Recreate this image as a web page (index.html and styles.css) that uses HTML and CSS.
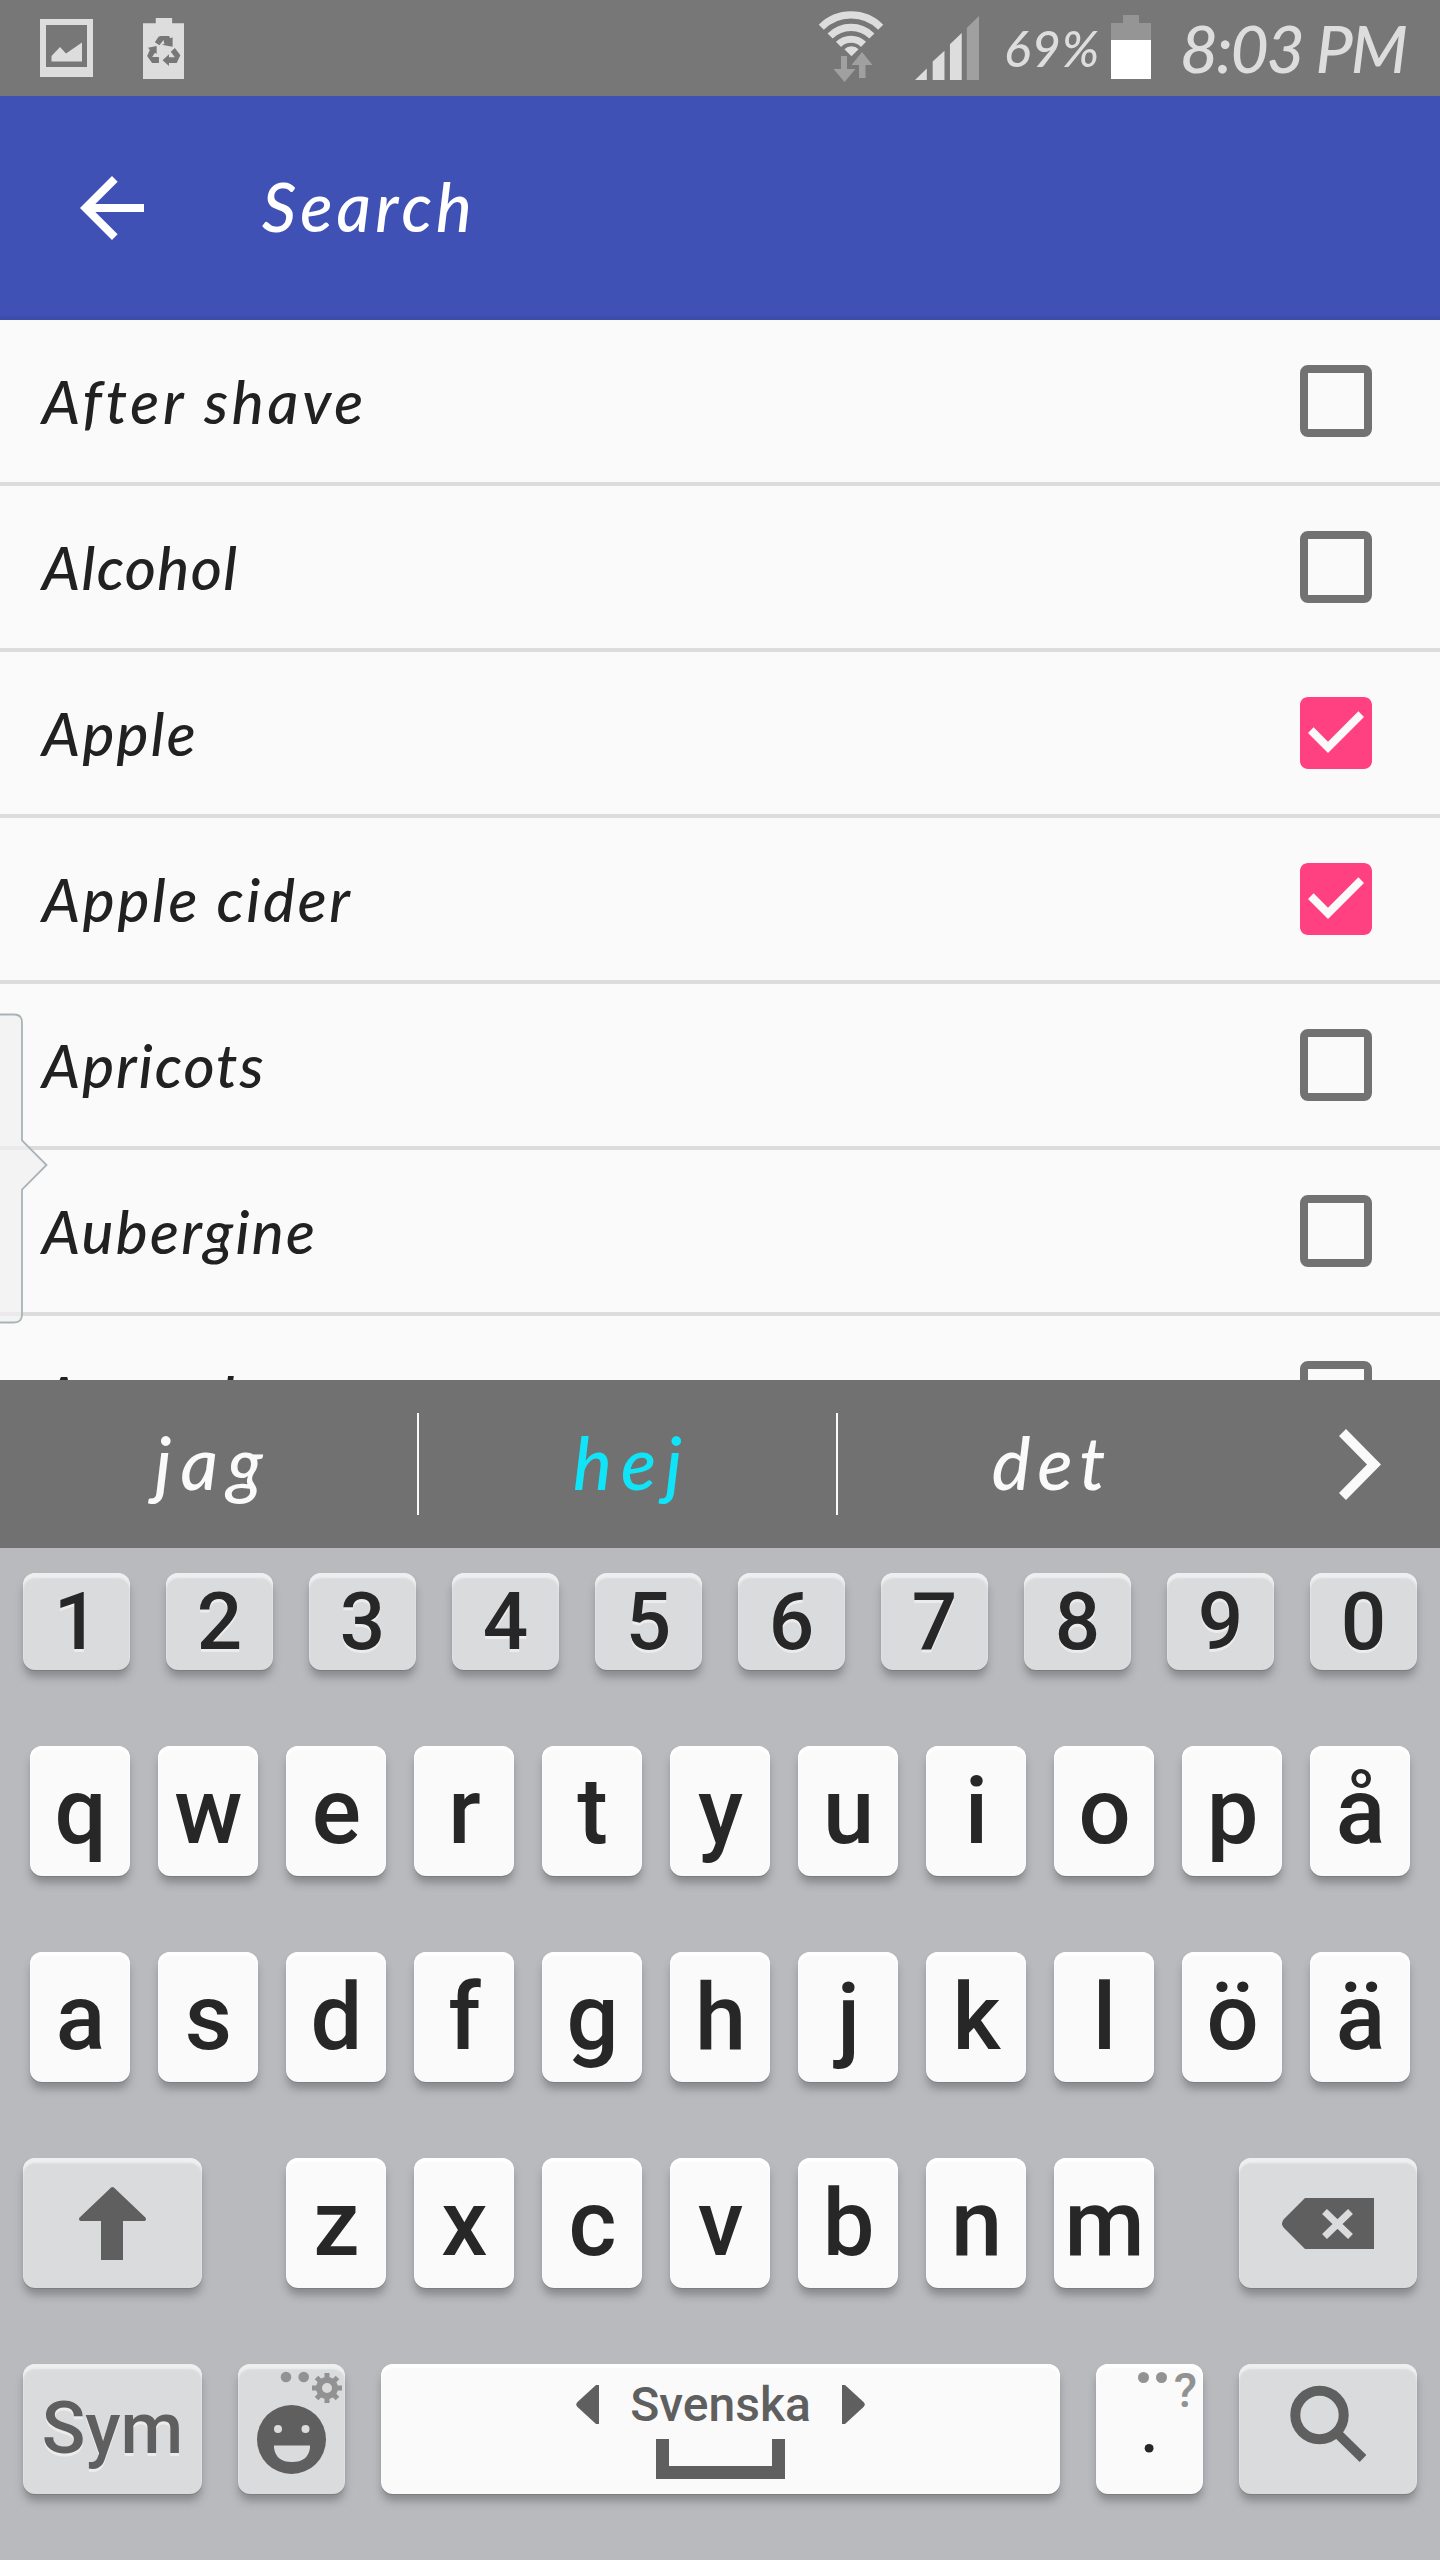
FILE: index.html
```html
<!DOCTYPE html>
<html lang="sv">
<head>
<meta charset="utf-8">
<title>Search</title>
<link rel="stylesheet" href="styles.css">
</head>
<body>
<div class="screen">
  <header class="status">
    <svg class="st-image" viewBox="0 0 53 58"><path fill="#ddd" fill-rule="evenodd" d="M0 0H53V58H0ZM6 6V48H47V6Z"/><path fill="#ddd" d="M11.500 42.500V37L20 28L26 34.500L42 23.500V42.500Z"/></svg>
    <svg class="st-recycle" viewBox="311 51 90 183" preserveAspectRatio="none"><path fill="#ddd" d="M339 51H375V67H401V234H311V67H339Z"/><path fill="#777" d="M337 124L345 107L350 105H368L371 112L376 109V137L352 131L358 129L356 117L347 133ZM322 140L341 135V158L337 156L331 168H346V186H331L320 165L326 147ZM372 152L381 141L393 163L385 186H368V195L354 178L368 160V169H381Z"/></svg>
    <div class="st-right">
      <svg class="st-wifi" viewBox="0 0 66 71"><g fill="none" stroke="#ddd" stroke-width="7.200"><path d="M3.300 16.200A42 42 0 0 1 62.700 16.200"/><path d="M12.100 25A29.600 29.600 0 0 1 53.900 25"/><path d="M20.500 33.400A17.700 17.700 0 0 1 45.500 33.400"/></g><path fill="#ddd" d="M33.500 45.300L26.400 38.200A10 10 0 0 1 40.600 38.200Z"/><path fill="#a0a0a0" d="M23 45H29V58H37.500L26.500 71L15.500 58H23ZM41 67V54H33.500L44 41L54.500 54H47.500V67Z"/></svg>
      <svg class="st-signal" viewBox="321 47 152 193" preserveAspectRatio="none"><path fill="#ddd" d="M321 240L349 205V240ZM363 240V184L391 152V240ZM404 240V132L432 98V240Z"/><path fill="#a0a0a0" d="M444 240V83L473 47V240Z"/></svg>
      <span class="st-percent">69%</span>
      <svg class="st-battery" viewBox="0 0 40 64"><path fill="#959595" d="M12 0H28V8H40V25H0V8H12Z"/><path fill="#fff" d="M0 25H40V64H0Z"/></svg>
      <span class="st-time">8:03 PM</span>
    </div>
  </header>

  <div class="toolbar">
    <svg class="back" viewBox="4 4 16 16"><path fill="#fff" d="M20 11H7.830l5.590-5.590L12 4l-8 8 8 8 1.410-1.410L7.830 13H20v-2z"/></svg>
    <h1 class="title">Search</h1>
  </div>

  <main class="list">
    <div class="row"><span class="label l-shave">After shave</span><span class="box"></span></div>
    <div class="row"><span class="label l-alcohol">Alcohol</span><span class="box"></span></div>
    <div class="row"><span class="label l-apple">Apple</span><svg class="check" viewBox="3 3 18 18"><path fill="#ff4081" d="M19 3H5c-1.110 0-2 .9-2 2v14c0 1.100.890 2 2 2h14c1.110 0 2-.9 2-2V5c0-1.100-.890-2-2-2zm-9 14l-5-5 1.410-1.410L10 14.170l7.590-7.590L19 8l-9 9z"/></svg></div>
    <div class="row"><span class="label l-cider">Apple cider</span><svg class="check" viewBox="3 3 18 18"><path fill="#ff4081" d="M19 3H5c-1.110 0-2 .9-2 2v14c0 1.100.890 2 2 2h14c1.110 0 2-.9 2-2V5c0-1.100-.890-2-2-2zm-9 14l-5-5 1.410-1.410L10 14.170l7.590-7.590L19 8l-9 9z"/></svg></div>
    <div class="row"><span class="label l-apricots">Apricots</span><span class="box"></span></div>
    <div class="row"><span class="label l-aubergine">Aubergine</span><span class="box"></span></div>
    <div class="row"><span class="label l-avocado">Avocado</span><span class="box"></span></div>
    <svg class="edge-handle" viewBox="0 0 50 312"><path d="M-2 1.500H14Q22 1.500 22 9.500V127.500L46.500 152L22 176.500V301.500Q22 309.500 14 309.500H-2Z" fill="#f0f0f0" fill-opacity=".7" stroke="#a9b3b7" stroke-width="1.800"/></svg>
  </main>

  <div class="suggest">
    <span class="word w-jag">jag</span>
    <span class="word w-hej">hej</span>
    <span class="word w-det">det</span>
    <span class="more"><svg viewBox="0 0 42 71"><path fill="#fafafa" d="M7 0L42 35.500L7 71L0 64L28 35.500L0 7Z"/></svg></span>
  </div>

  <div class="keyboard">
    <div class="keys digits">
      <span class="key gray">1</span><span class="key gray">2</span><span class="key gray">3</span><span class="key gray">4</span><span class="key gray">5</span><span class="key gray">6</span><span class="key gray">7</span><span class="key gray">8</span><span class="key gray">9</span><span class="key gray">0</span>
    </div>
    <div class="keys letters">
      <span class="key">q</span><span class="key">w</span><span class="key">e</span><span class="key">r</span><span class="key">t</span><span class="key">y</span><span class="key">u</span><span class="key">i</span><span class="key">o</span><span class="key">p</span><span class="key">å</span>
    </div>
    <div class="keys letters">
      <span class="key">a</span><span class="key">s</span><span class="key">d</span><span class="key">f</span><span class="key">g</span><span class="key">h</span><span class="key">j</span><span class="key">k</span><span class="key">l</span><span class="key">ö</span><span class="key">ä</span>
    </div>
    <div class="keys bottom-letters">
      <span class="key gray wide"><svg class="full" viewBox="0 0 179 130"><path fill="#5f5f5f" stroke="#5f5f5f" stroke-width="4" stroke-linejoin="round" d="M89.500 31L121 61H58Z"/><path fill="#5f5f5f" d="M78 60H100V102H78Z"/></svg></span>
      <div class="mid"><span class="key">z</span><span class="key">x</span><span class="key">c</span><span class="key">v</span><span class="key">b</span><span class="key">n</span><span class="key">m</span></div>
      <span class="key gray wide action"><svg class="full" viewBox="0 0 178 130"><path fill="#5f5f5f" d="M66 40H135V91H66L45 70Q41 65.500 45 61Z"/><path fill="none" stroke="#dadbdd" stroke-width="7" d="M85.500 53.500L111.500 78.500M111.500 53.500L85.500 78.500"/></svg></span>
    </div>
    <div class="keys functions">
      <span class="key gray wide sym">Sym</span>
      <span class="key gray small"><svg class="full" viewBox="0 0 107 130"><g fill="#929292"><circle cx="48" cy="13" r="5.300"/><circle cx="65.700" cy="13" r="5.300"/></g><g stroke="#929292" stroke-width="5"><path d="M89 9V14M89 34V39M74 24H79M99 24H104M78.500 13.500L82 17M96 31L99.500 34.500M99.500 13.500L96 17M82 31L78.500 34.500"/><circle cx="89" cy="24" r="8" fill="none" stroke-width="6"/></g><circle cx="53.500" cy="75.500" r="34.500" fill="#5f5f5f"/><path fill="#dadbdd" d="M36 81.500H72V84Q70 98 54 98Q38 98 36 84Z"/><g fill="#dadbdd"><circle cx="40" cy="65" r="4"/><circle cx="67.500" cy="65" r="4"/></g></svg></span>
      <span class="key space">
        <span class="lang"><svg viewBox="0 0 23 39"><path fill="#5f5f5f" d="M23 0V39H20L1.500 22Q-1 19.500 1.500 17L20 0Z"/></svg><span class="lang-name">Svenska</span><svg viewBox="0 0 23 39"><path fill="#5f5f5f" d="M0 0V39H3L21.500 22Q24 19.500 21.500 17L3 0Z"/></svg></span>
        <span class="bracket"></span>
      </span>
      <span class="key small dot"><span class="hint"><i></i><i></i><b>?</b></span><span class="period">.</span></span>
      <span class="key gray wide action"><svg class="full" viewBox="0 0 178 130"><circle cx="80.500" cy="51" r="24.200" fill="none" stroke="#5f5f5f" stroke-width="10"/><path d="M98 69L124 94.500" stroke="#5f5f5f" stroke-width="9.500"/></svg></span>
    </div>
  </div>
</div>
</body>
</html>
```
FILE: styles.css
```css
* { box-sizing: border-box; }
body { margin: 0; }
svg { display: block; flex: none; }

.screen {
  width: 1440px;
  height: 2560px;
  display: flex;
  flex-direction: column;
  overflow: hidden;
  background: #fafafa;
  font-family: Lato, "Open Sans", sans-serif;
  font-style: italic;
  font-weight: 500;
  white-space: nowrap;
}

/* status bar */
.status {
  flex: none;
  height: 96px;
  padding: 0 36px 0 40px;
  display: flex;
  align-items: center;
  background: #777;
  color: #ddd;
}
.st-image { width: 53px; height: 58px; margin-right: 50px; }
.st-recycle { width: 41px; height: 61px; }
.st-right { margin-left: auto; display: flex; align-items: center; }
.st-wifi { width: 66px; height: 71px; margin: -4px 31px 0 0; }
.st-signal { width: 64px; height: 64px; margin-right: 25px; }
.st-percent { width: 96px; margin-right: 11px; font-size: 50px; letter-spacing: 1px; line-height: 92px; }
.st-battery { width: 40px; height: 64px; margin: -2px 29px 0 0; }
.st-time { width: 224px; font-size: 66px; letter-spacing: -2.2px; line-height: 96px; }

/* toolbar */
.toolbar {
  flex: none;
  height: 224px;
  padding-left: 80px;
  display: flex;
  align-items: center;
  background: #3f51b5;
  border-bottom: 4px solid #3c4dac;
  color: #fff;
}
.back { width: 64px; height: 64px; margin: 4px 118px 0 0; }
.title { margin: 0; font-size: 67px; font-weight: 500; letter-spacing: 4.2px; }

/* list */
.list { position: relative; height: 1060px; flex: none; overflow: hidden; color: #212121; }
.row {
  height: 166px;
  padding: 0 68px 0 42px;
  display: flex;
  align-items: center;
  justify-content: space-between;
  border-bottom: 4px solid #dcdcdc;
}
.label { font-size: 60px; line-height: 72px; padding-bottom: 1px; }
.l-shave { letter-spacing: 3.8px; }
.l-alcohol { letter-spacing: 1.4px; }
.l-apple { letter-spacing: 2.3px; }
.l-cider { letter-spacing: 2.7px; }
.l-apricots { letter-spacing: 2px; }
.l-aubergine { letter-spacing: 2.3px; }
.l-avocado { letter-spacing: 1.5px; }
.box { width: 72px; height: 72px; border: 8px solid #727272; border-radius: 8px; }
.check { width: 72px; height: 72px; }
.edge-handle { position: absolute; left: 0; top: 693px; width: 50px; height: 312px; }

/* suggestions */
.suggest { flex: none; height: 168px; display: flex; align-items: center; background: #717171; color: #fafafa; font-size: 73px; letter-spacing: 9px; }
.word { width: 419px; height: 102px; padding-left: 9px; line-height: 98px; text-align: center; border-right: 2px solid #fafafa; }
.w-hej { color: #0fe4f8; }
.w-det { border-right: 0; letter-spacing: 7px; }
.more { flex: 1; padding-left: 82px; }
.more svg { width: 42px; height: 71px; }

/* keyboard */
.keyboard {
  flex: none;
  height: 1012px;
  padding: 25px 23px 0;
  background: #b9babe;
  color: #272727;
  font-family: Roboto, sans-serif;
  font-style: normal;
  font-weight: 500;
  letter-spacing: 0;
}
.keys { display: flex; justify-content: space-between; height: 130px; margin-bottom: 76px; }
.key {
  display: flex;
  align-items: center;
  justify-content: center;
  width: 100px;
  height: 130px;
  border-radius: 12px;
  background: #fafafa;
  font-size: 92px;
  line-height: 130px;
  box-shadow: inset 0 4px 2px #fff, 0 1px 0 #7d7e80, 0 8px 8px -1px rgba(70, 70, 75, .42);
}
.gray {
  background: #dadbdd;
  text-shadow: 0 3px 0 #ececed;
  box-shadow: inset 0 5px 2px #efeff0, 0 1px 0 #7d7e80, 0 8px 8px -1px rgba(70, 70, 75, .42);
}
.digits { height: 97px; }
.digits .key { width: 107px; height: 97px; font-size: 80px; line-height: 97px; padding-top: 1px; }
.letters { padding: 0 7px; }
.letters .key, .mid .key { padding: 1px 0 0 1px; }
.mid { display: flex; gap: 28px; }
.key.wide { width: 179px; }
.key.action { width: 178px; }
.bottom-letters { justify-content: flex-start; }
.bottom-letters .mid { margin: 0 85px 0 84px; }
.key.small { width: 107px; }
.key.sym { font-size: 72px; color: #5f5f5f; }
.full { width: 100%; height: 100%; }
.key.space { width: 679px; flex-direction: column; justify-content: flex-start; padding: 11px 0 0; }
.lang { display: flex; align-items: center; gap: 31px; height: 60px; padding-bottom: 1px; }
.lang svg { width: 23px; height: 39px; }
.lang-name { font-size: 48px; line-height: 54px; color: #5f5f5f; }
.bracket { width: 129px; height: 40px; margin-top: 4px; border: 13px solid #5f5f5f; border-top: 0; }
.key.dot { flex-direction: column; justify-content: flex-start; }
.hint { align-self: flex-end; display: flex; gap: 7px; height: 52px; padding: 8px 6px 0 0; color: #929292; }
.hint i { width: 11px; height: 11px; border-radius: 50%; background: #929292; }
.hint b { font-size: 48px; font-weight: 500; line-height: 38px; }
.period { font-size: 64px; line-height: 30px; }
```
